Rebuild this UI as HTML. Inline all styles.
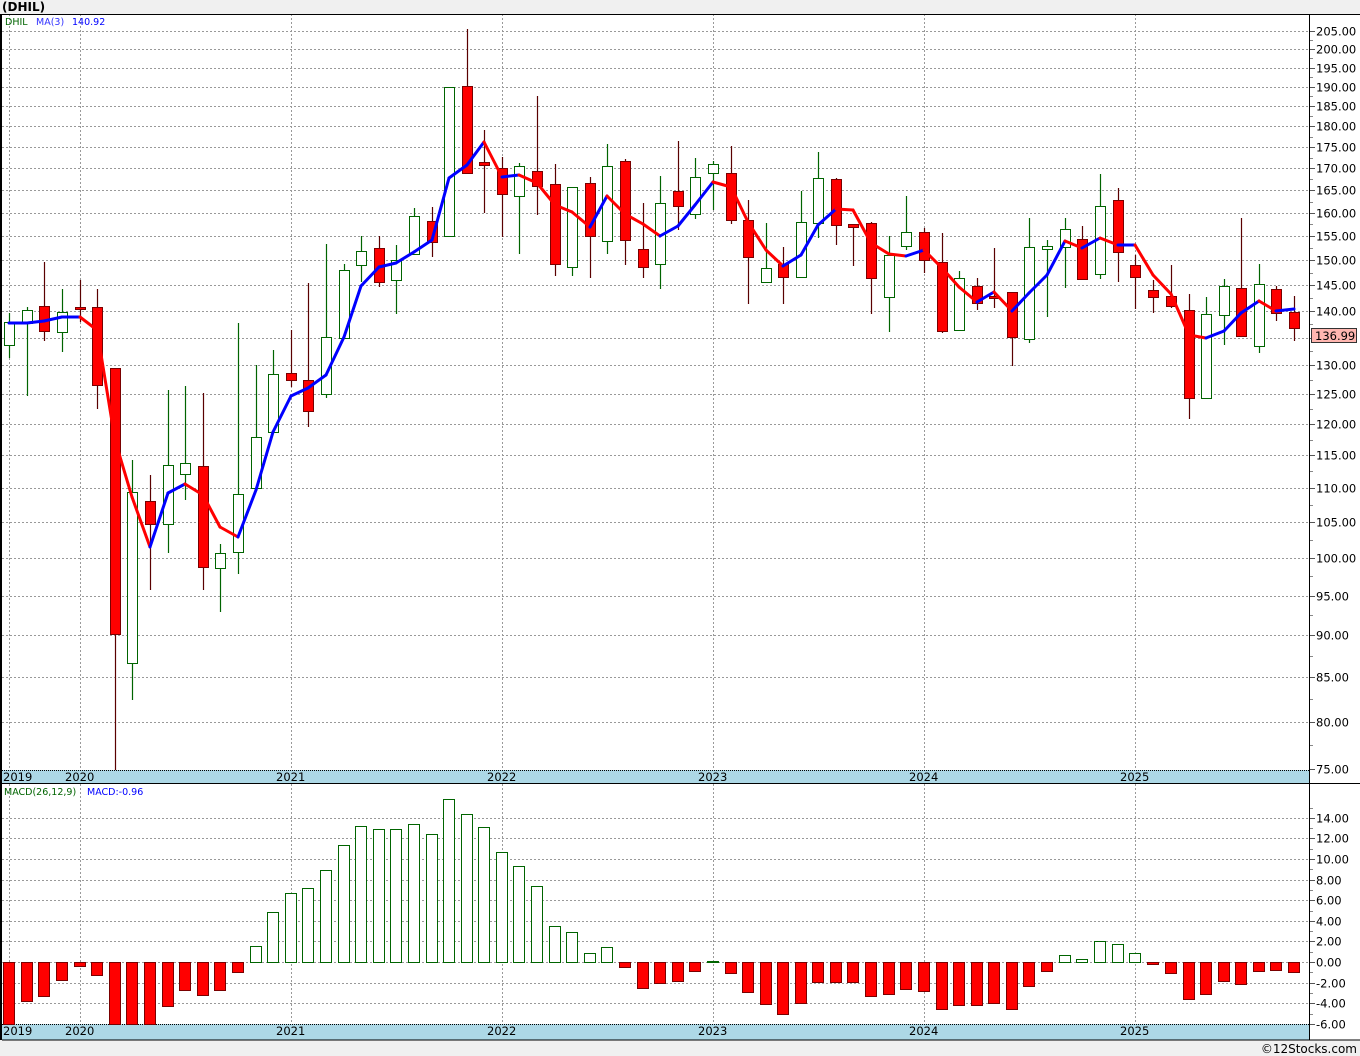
<!DOCTYPE html>
<html><head><meta charset="utf-8">
<style>
html,body{margin:0;padding:0;background:#fff;width:1360px;height:1056px;overflow:hidden}
svg{display:block;font-family:"DejaVu Sans","Liberation Sans",sans-serif}
</style></head>
<body>
<svg id="s" width="1360" height="1056" xmlns="http://www.w3.org/2000/svg"></svg>
<script>
const S=document.getElementById('s');let h='';
const Y=p=>31+734*Math.log(205/p);
h+='<rect x="0" y="0" width="1360" height="14" fill="#f0f0f0"/>';
h+='<text x="2" y="11" font-size="12" font-weight="bold" fill="#000">(DHIL)</text>';
h+='<rect x="0" y="1040" width="1360" height="16" fill="#f0f0f0"/>';
h+='<text x="1357" y="1053" font-size="12" text-anchor="end" fill="#000">©12Stocks.com</text>';
// price grid
for(let p=205;p>=75;p-=5){const y=Math.round(Y(p))+.5;
 if(p>75)h+=`<line x1="2" x2="1309" y1="${y}" y2="${y}" stroke="#999" stroke-dasharray="2,2"/>`;
 h+=`<line x1="1309" x2="1315" y1="${y}" y2="${y}" stroke="#555"/>`;
 h+=`<text x="1316" y="${y+4}" font-size="11.5" fill="#000">${p.toFixed(2)}</text>`;
 if(p>75){const y2=Math.round(Y(p-2.5))+.5;h+=`<line x1="1309" x2="1313" y1="${y2}" y2="${y2}" stroke="#888"/>`;}
}
// macd grid
const M=v=>962-v*10.3;
for(let v=14;v>=-6;v-=2){const y=Math.round(M(v))+.5;
 if(v>-6)h+=`<line x1="2" x2="1309" y1="${y}" y2="${y}" stroke="#999" stroke-dasharray="2,2"/>`;
 h+=`<line x1="1309" x2="1315" y1="${y}" y2="${y}" stroke="#555"/>`;
 const y2=Math.round(M(v+1))+.5;h+=`<line x1="1309" x2="1313" y1="${y2}" y2="${y2}" stroke="#888"/>`;
 h+=`<text x="1316" y="${y+4}" font-size="11.5" fill="#000">${v.toFixed(2)}</text>`;}
// vertical grid
const vx=[9,80,291,502,713,924,1135];
vx.forEach(x=>{h+=`<line x1="${x+.5}" x2="${x+.5}" y1="14" y2="770" stroke="#999" stroke-dasharray="2,2"/><line x1="${x+.5}" x2="${x+.5}" y1="784" y2="1024" stroke="#999" stroke-dasharray="2,2"/>`;});
// date bands
[[770,783],[1024,1040]].forEach(([a,b])=>{h+=`<rect x="2" y="${a}" width="1307" height="${b-a}" fill="#add8e6"/><line x1="2" x2="1309" y1="${a+.5}" y2="${a+.5}" stroke="#000" stroke-dasharray="1,1"/>`;
 const yrs=['2019','2020','2021','2022','2023','2024','2025'];vx.forEach((x,i)=>{h+=`<text x="${i==0?3:x-15}" y="${a+11}" font-size="11.5" fill="#000">${yrs[i]}</text>`;});});
h+='<line x1="2" x2="1309" y1="783.5" y2="783.5" stroke="#000"/>';
h+='<line x1="2" x2="1360" y1="1040" y2="1040" stroke="#000" stroke-width="1"/>';
// candles: x,H,top,bot,L,color
const C=[[9,313,322,345,358,'g'],[27,307,310,323,396,'g'],[44,262,306,331,341,'r'],[62,289,312,332,352,'g'],[80,280,307,309,322,'r'],[97,289,307,385,409,'r'],[115,368,368,634,770,'r'],[132,460,492,663,700,'g'],[150,475,501,524,590,'r'],[168,390,465,524,553,'g'],[185,386,463,474,500,'g'],[203,393,466,567,590,'r'],[220,544,553,568,612,'g'],[238,323,494,552,574,'g'],[256,365,437,488,488,'g'],[273,350,374,432,432,'g'],[291,330,373,380,387,'r'],[308,283,380,411,427,'r'],[326,244,337,394,398,'g'],[344,264,270,338,338,'g'],[361,236,251,265,282,'g'],[379,236,248,282,287,'r'],[396,245,260,280,314,'g'],[414,208,216,254,254,'g'],[432,207,221,242,257,'r'],[449,87,87,236,237,'g'],[467,29,86,173,174,'r'],[484,130,162,165,213,'r'],[502,157,168,194,237,'r'],[519,163,166,196,254,'g'],[537,96,171,186,215,'r'],[555,164,184,264,276,'r'],[572,187,187,267,276,'g'],[590,177,183,236,278,'r'],[607,144,166,241,254,'g'],[625,159,161,240,265,'r'],[643,203,249,267,278,'r'],[660,176,203,264,289,'g'],[678,141,191,206,230,'r'],[695,158,177,214,219,'g'],[713,161,164,173,210,'g'],[731,146,173,220,224,'r'],[748,200,220,257,304,'r'],[766,223,268,282,282,'g'],[783,247,264,277,304,'r'],[801,191,222,277,277,'g'],[818,152,178,223,238,'g'],[836,178,179,225,245,'r'],[853,224,224,227,266,'r'],[871,222,223,278,314,'r'],[889,236,255,297,332,'g'],[906,196,232,246,250,'g'],[924,228,232,260,273,'r'],[942,233,262,331,333,'r'],[959,271,278,330,331,'g'],[977,278,286,303,310,'r'],[994,248,296,297,308,'r'],[1012,292,292,337,366,'r'],[1029,218,247,339,343,'g'],[1047,240,246,249,317,'g'],[1065,218,229,247,288,'g'],[1082,226,239,279,279,'r'],[1100,174,206,274,279,'g'],[1118,188,200,252,282,'r'],[1135,255,265,277,309,'r'],[1153,280,290,297,313,'r'],[1171,265,296,306,308,'r'],[1189,294,310,398,419,'r'],[1206,297,314,398,398,'g'],[1224,279,286,315,345,'g'],[1241,218,288,336,336,'r'],[1259,264,284,346,353,'g'],[1276,286,289,313,321,'r'],[1294,296,312,328,341,'r']];
C.forEach(([x,H,t,b,L,c])=>{const sc=c=='g'?'#006400':'#5a0000',fc=c=='g'?'#fff':'#ff0000';
 h+=`<line x1="${x+.5}" x2="${x+.5}" y1="${H}" y2="${L}" stroke="${sc}" stroke-width="1.2"/>`;
 h+=`<rect x="${x-4.5}" y="${t+.5}" width="10" height="${Math.max(b-t,2)}" fill="${fc}" stroke="${c=='g'?'#006400':'#7a0000'}" stroke-width="1"/>`;});
// MA
const MA=[323,323,321,317,317,330,440,497,547,493,484,495,527,537,490,432,396,388,375,337,286,267,263,252,240,178,165,142,177,175,183,205,212,227,196,214,224,236,226,205,182,187,222,250,266,255,225,209,210,243,254,256,250,268,287,302,292,311,293,275,241,248,238,245,245,275,294,335,338,331,313,301,311,309];
for(let i=0;i<MA.length-1;i++){const c=MA[i+1]>MA[i]?'#ff0000':'#0000ff';
 h+=`<line x1="${C[i][0]}" y1="${MA[i]}" x2="${C[i+1][0]}" y2="${MA[i+1]}" stroke="${c}" stroke-width="3" stroke-linecap="round"/>`;}
// MACD bars
const MB=[1024,1001,996,980,966,975,1024,1024,1024,1006,990,995,990,972,946,912,893,888,870,845,826,829,829,824,834,799,814,827,852,866,886,926,932,953,947,967,988,983,981,971,961,973,992,1004,1014,1003,982,982,982,996,994,989,991,1009,1005,1005,1003,1009,986,971,955,959,941,944,953,964,973,999,994,981,984,971,970,972];
MB.forEach((v,i)=>{const x=C[i][0];if(v<962){h+=`<rect x="${x-5.5}" y="${v+.5}" width="11" height="${962-v}" fill="#fff" stroke="#006400"/>`;}
 else{h+=`<rect x="${x-5.5}" y="962.5" width="11" height="${Math.max(v-962,1)}" fill="#ff0000" stroke="#7a0000"/>`;}});
// frames
h+='<line x1="1" x2="1" y1="14" y2="1040" stroke="#000" stroke-width="2"/>';
h+='<line x1="0" x2="1360" y1="14.5" y2="14.5" stroke="#000"/>';
h+='<line x1="1309.5" x2="1309.5" y1="14" y2="1040" stroke="#000"/>';
h+='<line x1="1309" x2="1360" y1="783.5" y2="783.5" stroke="#000"/>';
// legends
h+='<text x="5" y="25" font-size="9.5" fill="#006400">DHIL</text><text x="36" y="25" font-size="9.5" fill="#3333ff">MA(3)</text><text x="72" y="25" font-size="9.5" fill="#0000ff">140.92</text>';
h+='<text x="4" y="795" font-size="9.5" fill="#006400">MACD(26,12,9)</text><text x="87" y="795" font-size="9.5" fill="#0000ff">MACD:-0.96</text>';
// price tag
h+='<rect x="1311.5" y="328.5" width="45" height="14" fill="#ffb6b0" stroke="#333"/><text x="1315" y="340" font-size="11.5" fill="#000">136.99</text>';
S.innerHTML=h;
</script>
</body></html>
